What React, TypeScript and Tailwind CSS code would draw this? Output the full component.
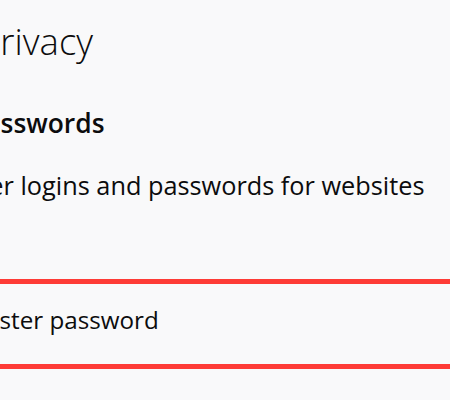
import React from 'react';

export default function App() {
  return (
    <div className="w-[450px] h-[400px] overflow-hidden bg-[#f9f9fa] text-[#0c0c0d] font-['Open_Sans',sans-serif]">
      <div className="pt-[17px] whitespace-nowrap">
        <h1 className="-ml-[21px] text-[36.5px] leading-[48px] font-light">Privacy</h1>

        <section className="mt-[40px]">
          <h2 className="-ml-[31px] text-[26.4px] leading-[36px] font-semibold">Passwords</h2>
          <label className="mt-[28px] block -ml-[117px] text-[25.3px] leading-[32px]">
            Remember logins and passwords for websites
          </label>

          <div className="mt-[78px] h-[90px] border-y-[5px] border-[#fe3b36] pt-[20px]">
            <label className="block -ml-[105px] text-[24.2px] leading-[32px]">Use a master password</label>
          </div>
        </section>
      </div>
    </div>
  );
}
